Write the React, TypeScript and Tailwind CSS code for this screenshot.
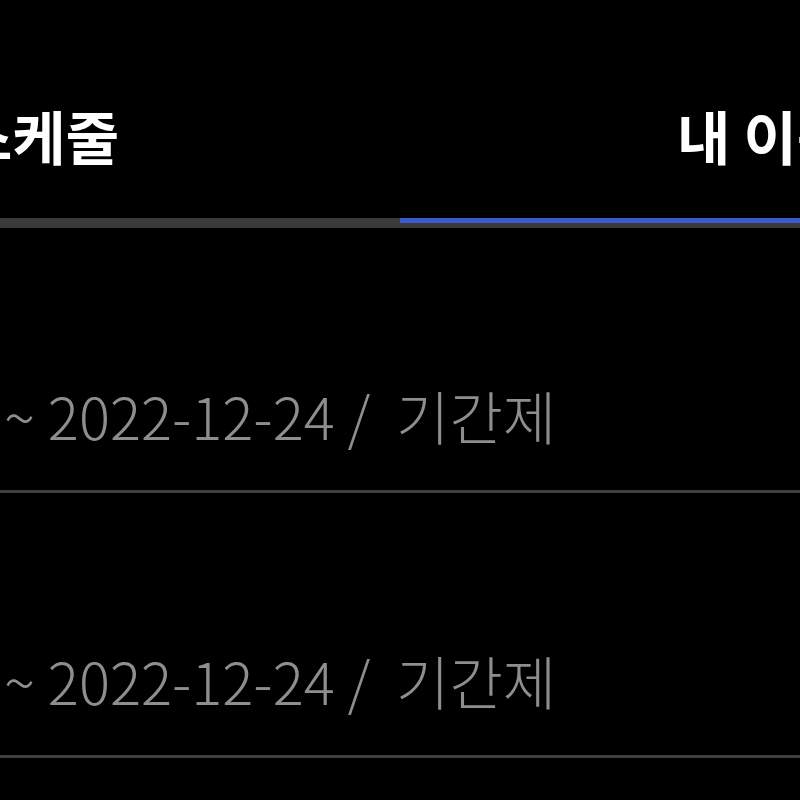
import React from 'react';

const FONT = { fontFamily: '"Noto Sans CJK KR", "Noto Sans", sans-serif' };

const rows = [
  { end: '2022-12-24', type: '기간제' },
  { end: '2022-12-24', type: '기간제' },
];

const App: React.FC = () => {
  return (
    <div className="h-[800px] w-[800px] overflow-hidden bg-black" style={FONT}>
      <div className="flex h-[218px]">
        <div className="w-1/2 overflow-hidden pt-[106px]">
          <div className="-ml-[41px] whitespace-nowrap text-[58px] font-bold leading-[58px] text-white">
            스케줄
          </div>
        </div>
        <div className="w-1/2 overflow-hidden pt-[106px]">
          <div className="pl-[277px] whitespace-nowrap text-[58px] font-bold leading-[58px] text-white">
            내 이용권
          </div>
        </div>
      </div>
      <div className="flex h-[10px]">
        <div className="w-1/2 bg-[#3a3a3a]" />
        <div className="flex w-1/2 flex-col">
          <div className="h-[5px] bg-[#3b5ccc]" />
          <div className="h-[5px] bg-[#3a3a3a]" />
        </div>
      </div>
      {rows.map((row, i) => (
        <div
          key={i}
          className="flex h-[265px] flex-col justify-end border-b-[3px] border-[#3f3f3f] pb-[46px]"
        >
          <div className="whitespace-pre pl-[4px] text-[58px] font-light leading-[58px] text-[#8e8e8e]">
            {`~ ${row.end} /  ${row.type}`}
          </div>
        </div>
      ))}
      <div className="h-[265px]" />
    </div>
  );
};

export default App;
